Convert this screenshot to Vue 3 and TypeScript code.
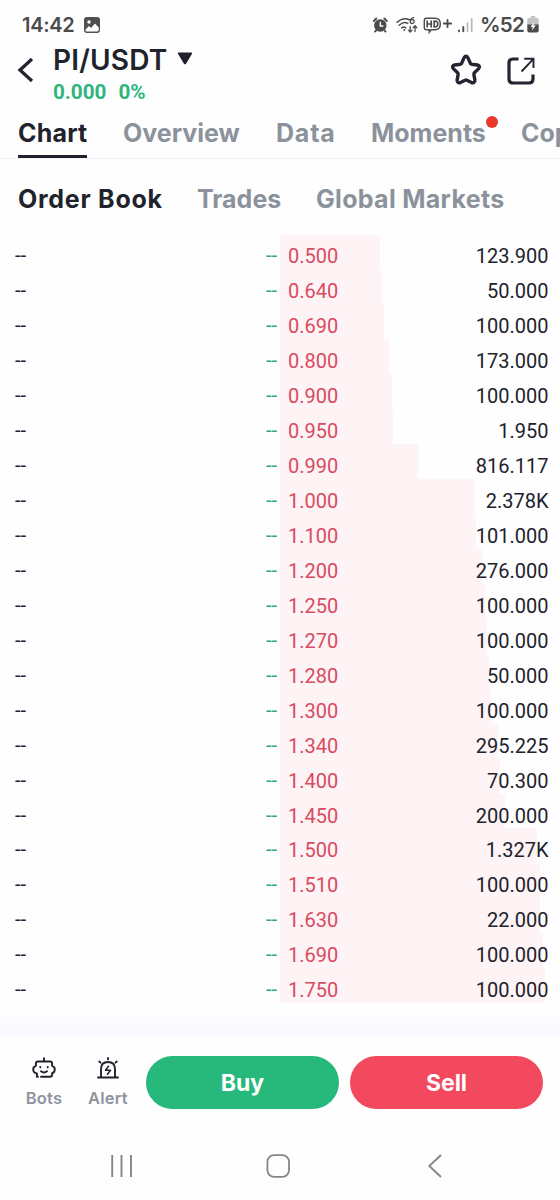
<script setup lang="ts">
interface Ask {
  price: string
  amount: string
  depth: number
}

interface Tab {
  label: string
  width: number
  active?: boolean
  dot?: boolean
}

const tabs: Tab[] = [
  { label: 'Chart', width: 69, active: true },
  { label: 'Overview', width: 117 },
  { label: 'Data', width: 59 },
  { label: 'Moments', width: 114, dot: true },
  { label: 'Copy', width: 60 },
]

const sections: Tab[] = [
  { label: 'Order Book', width: 144, active: true },
  { label: 'Trades', width: 84 },
  { label: 'Global Markets', width: 190 },
]

const asks: Ask[] = [
  { price: '0.500', amount: '123.900', depth: 100 },
  { price: '0.640', amount: '50.000', depth: 101.5 },
  { price: '0.690', amount: '100.000', depth: 104 },
  { price: '0.800', amount: '173.000', depth: 109 },
  { price: '0.900', amount: '100.000', depth: 112.3 },
  { price: '0.950', amount: '1.950', depth: 112.5 },
  { price: '0.990', amount: '816.117', depth: 137.7 },
  { price: '1.000', amount: '2.378K', depth: 193.5 },
  { price: '1.100', amount: '101.000', depth: 196 },
  { price: '1.200', amount: '276.000', depth: 202.3 },
  { price: '1.250', amount: '100.000', depth: 204.7 },
  { price: '1.270', amount: '100.000', depth: 207 },
  { price: '1.280', amount: '50.000', depth: 208.5 },
  { price: '1.300', amount: '100.000', depth: 211 },
  { price: '1.340', amount: '295.225', depth: 218 },
  { price: '1.400', amount: '70.300', depth: 219.7 },
  { price: '1.450', amount: '200.000', depth: 224.5 },
  { price: '1.500', amount: '1.327K', depth: 257 },
  { price: '1.510', amount: '100.000', depth: 259.5 },
  { price: '1.630', amount: '22.000', depth: 260.2 },
  { price: '1.690', amount: '100.000', depth: 262.5 },
  { price: '1.750', amount: '100.000', depth: 265 },
]
</script>

<template>
  <div class="screen">
    <div class="status">
      <span class="clock">14:42</span>
      <svg class="photo" width="16" height="16" viewBox="0 0 16 16">
        <rect width="16" height="16" rx="3" fill="#505050" />
        <circle cx="5" cy="5" r="1.7" fill="#fff" />
        <path d="M1.5 12.5 5 9l2 2 4-4.5 3.7 4v2.2q0 1.8-1.8 1.8H3q-1.5 0-1.5-1z" fill="#fff" />
      </svg>
      <svg class="sys" width="108" height="20" viewBox="0 0 108 20" fill="none" stroke="#4c4c4c" stroke-linecap="round">
        <circle cx="8.3" cy="9.5" r="6.2" fill="#4c4c4c" stroke="none" />
        <path d="M1.8 5 4.3 2.5M14.800 5l-2.500-2.500M4 14.600l-1 1M12.600 14.600l1 1" stroke-width="1.9" />
        <path d="M8.3 6.2V10h2.600" stroke="#fff" stroke-width="1.4" />
        <path d="M25 6.300Q31.300.800 37.400 3.700M27.200 9.200q4.600-4.200 8.500-1.800M29.700 11.900q2.300-1.800 4 0" stroke-width="1.5" />
        <circle cx="32.300" cy="14" r="1" fill="#4c4c4c" stroke="none" />
        <path d="M41.800 1.600q-3.600.4-3.600 4a2 2 0 1 0 .4-1.300" stroke-width="1.300" />
        <path d="M38.200 10.300V16m-1.800-1.900 1.800 1.900 1.800-1.900M43 15.500V9.800m-1.800 1.900L43 9.800l1.800 1.900" stroke-width="1.300" />
        <path d="M54.500 2.300H63q5.300 0 5.300 5.700T63 13.700h-3.700l-2 2.500v-2.500h-2.800q-2.200 0-2.200-2.200v-7q0-2.200 2.200-2.200z" stroke-width="1.400" />
        <path d="M55.200 5.200v5.600M59.200 5.200v5.600M55.200 8h4M62.200 5.200v5.600q3.600.4 3.600-2.800t-3.600-2.800" stroke-width="1.700" />
        <path d="M71.800 7.500h7.400M75.500 3.800v7.400" stroke-width="1.800" />
        <path d="M87 14.500v.8M91.300 11v4.300" stroke-width="1.900" />
        <path d="M95.500 7v8.300M99.700 2.800v12.500" stroke="#b8b8b8" stroke-width="1.700" />
      </svg>
      <span class="charge">%52</span>
      <svg class="battery" width="12" height="17" viewBox="0 0 12 17">
        <path d="M3.800 0h4.400v2H10q1.700 0 1.700 1.700V9H.300V3.700Q.300 2 2 2h1.800z" fill="#c3c3c3" />
        <path d="M.300 8.500h11.400v6q0 2-2 2H2.300q-2 0-2-2z" fill="#4b4b4b" />
        <path d="m7.300 6-3.800 4.900h2.200L5 14.500l3.800-5H6.600z" fill="#fff" />
      </svg>
    </div>

    <header class="head">
      <svg class="back" width="20" height="28" viewBox="0 0 20 28">
        <path d="M17 3 5 14l12 11" fill="none" stroke="#232530" stroke-width="3.300" />
      </svg>
      <div class="pair">
        <div class="pair-name">
          <span>PI/USDT</span>
          <svg width="16" height="13" viewBox="0 0 16 13">
            <path d="M1.800.500h12.400q1.500 0 .7 1.500L9.200 11.500q-1.200 1.700-2.400 0L1.100 2Q.300.500 1.800.500z" fill="#20222c" />
          </svg>
        </div>
        <div class="change"><span>0.000</span><span>0%</span></div>
      </div>
      <svg class="star" width="34" height="34" viewBox="0 0 34 34">
        <path d="M15 4.800q2-3.200 4 0l2.300 5.400q.4.800 1.300 1l5.800.8q3.300.9 1.300 3.600l-4.300 4.200q-.7.700-.5 1.700l1 5.600q0 3.400-3.400 2.500l-4.600-2.300q-.9-.500-1.800 0l-4.600 2.300q-3.400.9-3.400-2.500l1-5.600q.2-1-.5-1.700l-4.300-4.200q-2-2.700 1.300-3.600l5.800-.8q.9-.200 1.300-1z" fill="none" stroke="#232530" stroke-width="3.400" stroke-linejoin="round" />
      </svg>
      <svg class="share" width="30" height="30" viewBox="0 0 30 30" fill="none" stroke="#232530">
        <path d="M12.500 3H7Q3 3 3 7v16q0 4 4 4h16q4 0 4-4v-4.500" stroke-width="3.200" />
        <path d="M15.500 15.500 27 3.300M18.200 2.800H27.500V12" stroke-width="1.900" />
      </svg>
    </header>

    <nav class="tabs">
      <div v-for="t in tabs" :key="t.label" class="tab" :class="[{ active: t.active }, t.label.toLowerCase()]" :style="{ width: t.width + 'px' }">
        {{ t.label }}<i v-if="t.dot" class="dot"></i>
      </div>
    </nav>

    <div class="sections">
      <div v-for="s in sections" :key="s.label" class="section" :class="[{ active: s.active }, s.label.split(' ')[0].toLowerCase()]" :style="{ width: s.width + 'px' }">{{ s.label }}</div>
    </div>

    <main class="book">
      <div v-for="a in asks" :key="a.price" class="row">
        <div class="bid"><span>--</span><span class="up">--</span></div>
        <div class="ask">
          <div class="depth" :style="{ width: a.depth + 'px' }"></div>
          <span class="price">{{ a.price }}</span>
          <span>{{ a.amount }}</span>
        </div>
      </div>
    </main>

    <footer class="actions">
      <div class="tool bots">
        <svg width="26" height="24" viewBox="0 0 26 24" fill="none" stroke="#20222c" stroke-width="1.900" stroke-linecap="round" stroke-linejoin="round">
          <path d="M13 1.300V4.500M7 19.800H5.900V16.500Q2.200 16 2.200 12.300q0-2.600 2.700-3.400V6.500q0-2 2-2h12.200q2 0 2 2v2.400q2.700.8 2.700 3.400 0 3.400-2.700 4v1.500q0 2-2 2H10" />
          <path d="M9.300 9.900v.5M16.700 9.900v.5M10 14.300q3 2.300 6 0" />
        </svg>
        <span>Bots</span>
      </div>
      <div class="tool alert">
        <svg width="26" height="24" viewBox="0 0 26 24" fill="none" stroke="#20222c" stroke-width="1.900" stroke-linecap="round" stroke-linejoin="round">
          <path d="M3 20.500h20M6 20.500V12q0-7 7-7t7 7v8.500M13 1v1.300M4.300 4.500l1.200 1.200M21.700 4.500 20.500 5.700" />
          <path d="m13.500 9.300-3 4h5l-3 4" stroke-width="1.500" />
        </svg>
        <span>Alert</span>
      </div>
      <button class="buy">Buy</button>
      <button class="sell">Sell</button>
    </footer>

    <div class="sysnav">
      <svg width="24" height="24" viewBox="0 0 24 24" stroke="#858585" stroke-width="1.900"><path d="M3.200 1v22M12.500 1v22M22 1v22" /></svg>
      <svg width="24" height="24" viewBox="0 0 24 24"><rect x="1.400" y="1.200" width="21.600" height="21.600" rx="6.500" fill="none" stroke="#858585" stroke-width="1.800" /></svg>
      <svg width="24" height="24" viewBox="0 0 24 24"><path d="M18 1 6.300 12 18 23" fill="none" stroke="#858585" stroke-width="1.900" /></svg>
    </div>
  </div>
</template>

<style>
body { margin: 0; background: #fefefe; }
</style>

<style scoped>
* { box-sizing: border-box; }
.screen { width: 560px; height: 1200px; overflow: hidden; background: #fefefe; color: #20222c; font-family: Inter, "Liberation Sans", sans-serif; display: flex; flex-direction: column; }
svg { display: block; flex: none; }
.status { height: 44px; padding: 10px 21px 0 22px; display: flex; align-items: flex-start; color: #4b4b4b; }
.clock { font-size: 20px; font-weight: 600; line-height: 30px; width: 62px; letter-spacing: -0.3px; }
.photo { margin-top: 7px; }
.sys { margin: 6px 0 0 272px; }
.charge { font-size: 20.500px; font-weight: 600; line-height: 30px; width: 44px; letter-spacing: -0.800px; }
.battery { margin-top: 6px; margin-left: 3px; }
.head { height: 66px; display: flex; padding-left: 15px; }
.back { margin-top: 12px; }
.pair { margin-left: 18px; width: 395px; }
.pair-name { display: flex; align-items: center; gap: 10px; font-size: 28px; font-weight: 600; line-height: 32px; letter-spacing: 0.200px; white-space: nowrap; }
.pair-name span { width: 114px; }
.pair-name svg { margin-top: -3px; }
.change { display: flex; gap: 12px; color: #2eb57d; font-family: Roboto, sans-serif; font-weight: 700; font-size: 20.700px; line-height: 32px; }
.star { margin-top: 9px; margin-left: 1px; }
.share { margin-top: 12px; margin-left: 23px; }
.tabs { height: 49px; display: flex; gap: 36px; padding-left: 18px; border-bottom: 1.500px solid #f1f2f9; flex: none; }
.tab { flex: none; position: relative; height: 48px; line-height: 46px; font-size: 25px; font-weight: 700; color: #8b929b; white-space: nowrap; }
.tab.active { color: #20222c; border-bottom: 3px solid #20222c; letter-spacing: 0.200px; }
.data { letter-spacing: 0.800px; }
.dot { position: absolute; right: -13px; top: 6px; width: 12px; height: 12px; border-radius: 50%; background: #e83828; }
.sections { height: 76px; display: flex; gap: 35px; padding-left: 18px; flex: none; }
.section { line-height: 80px; font-size: 25px; font-weight: 700; color: #8b929b; white-space: nowrap; }
.section.active { color: #20222c; letter-spacing: 0.750px; }
.global { letter-spacing: 0.300px; }
.book { height: 800px; flex: none; background: linear-gradient(#fefefe 770px, #f8f9fe 800px); }
.row { height: 34.980px; display: flex; font-family: Roboto, sans-serif; font-size: 20px; line-height: 42px; }
.bid { width: 280px; padding: 0 3px 0 15px; display: flex; justify-content: space-between; line-height: 41px; }
.up { color: #2da77a; }
.ask { position: relative; width: 280px; padding: 0 11.500px 0 8px; display: flex; justify-content: space-between; }
.ask span { position: relative; z-index: 1; }
.depth { position: absolute; left: 0; top: -1px; bottom: 1px; background: #fef3f5; }
.row:first-child .depth { top: 0; }
.price { color: #d94b61; }
.actions { height: 97px; flex: none; background: #fefefe; display: flex; padding: 21px 17px 0 12px; }
.tool { width: 64px; display: flex; flex-direction: column; align-items: center; font-size: 16.500px; font-weight: 600; color: #8f949e; line-height: 24px; letter-spacing: 0.200px; }
.tool span { margin-top: 5px; }
.tool svg { margin-top: 1px; }
button { border: 0; border-radius: 27px; height: 53px; padding: 2px 0 0; width: 193px; color: #fff; font-family: inherit; font-weight: 700; font-size: 23px; line-height: 51px; }
.buy { background: #27b97b; margin-left: 6px; }
.sell { background: #f2495e; margin-left: 11px; }
.sysnav { height: 68px; display: flex; gap: 133px; padding: 22px 0 0 109px; }
</style>
